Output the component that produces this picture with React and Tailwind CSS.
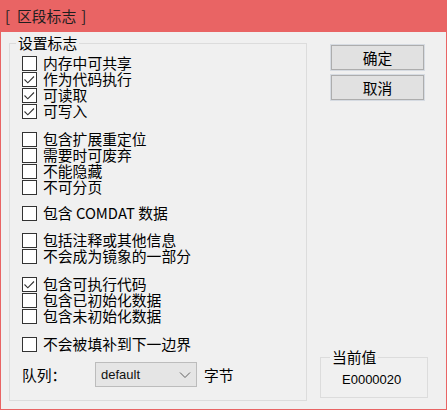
import React from "react";

const CJK = { fontFamily: '"Noto Sans CJK SC", "Noto Sans", sans-serif' };
const LAT = { fontFamily: '"Liberation Sans", Arial, sans-serif' };

function Box({ checked }) {
  return (
    <span className="w-[15px] h-[15px] border border-[#333333] bg-white flex items-center justify-center shrink-0">
      {checked && (
        <svg width="13" height="13" viewBox="0 0 13 13">
          <path d="M1.5 6.5 L4.8 9.8 L11 3.5" stroke="#333333" fill="none" strokeWidth="1.1" />
        </svg>
      )}
    </span>
  );
}

function Row({ checked, children }) {
  return (
    <div className="flex items-center h-[16px] gap-[6px]">
      <Box checked={checked} />
      <span className="leading-[16px] whitespace-nowrap">{children}</span>
    </div>
  );
}

function Button({ children }) {
  return (
    <div className="w-[95px] h-[27px] border border-[#d6dbe2] p-0">
      <div className="w-full h-full border border-[#adadad] bg-[#e1e1e1] flex items-center justify-center leading-[16px]">
        {children}
      </div>
    </div>
  );
}

export default function App() {
  return (
    <div
      className="w-[447px] h-[410px] bg-[#e96464] flex flex-col text-[14.8px] text-[#000000]"
      style={CJK}
    >
      <div className="h-[32px] shrink-0 flex items-center pl-[5px] text-[#1e1e1e] leading-[16px]">
        <span>[</span>
        <span className="ml-[7px]">区段标志</span>
        <span className="ml-[5px]">]</span>
      </div>
      <div className="flex-1 mx-[1px] mb-[1px] bg-[#f0f0f0] flex pl-[8px]">
        <fieldset className="mt-[3px] w-[298px] h-[366px] border border-[#dcdcdc] pl-[12px] pt-[4px] shrink-0">
          <legend className="-ml-[6px] px-[2px] leading-[16px]">设置标志</legend>
          <div className="flex flex-col">
            <Row>内存中可共享</Row>
            <Row checked>作为代码执行</Row>
            <Row checked>可读取</Row>
            <Row checked>可写入</Row>
          </div>
          <div className="flex flex-col mt-[12px]">
            <Row>包含扩展重定位</Row>
            <Row>需要时可废弃</Row>
            <Row>不能隐藏</Row>
            <Row>不可分页</Row>
          </div>
          <div className="flex flex-col mt-[10px]">
            <Row>包含 COMDAT 数据</Row>
          </div>
          <div className="flex flex-col mt-[11px]">
            <Row>包括注释或其他信息</Row>
            <Row>不会成为镜象的一部分</Row>
          </div>
          <div className="flex flex-col mt-[12px]">
            <Row checked>包含可执行代码</Row>
            <Row>包含已初始化数据</Row>
            <Row>包含未初始化数据</Row>
          </div>
          <div className="flex flex-col mt-[12px]">
            <Row>不会被填补到下一边界</Row>
          </div>
          <div className="flex items-center mt-[10px] h-[25px]">
            <span className="w-[73px] leading-[16px]">队列：</span>
            <div className="w-[102px] h-[25px] border border-[#bcbcbc] bg-[#e5e5e5] flex items-center justify-between pl-[5px] pr-[5px]">
              <span className="text-[13px] leading-[16px] text-[#111]" style={LAT}>default</span>
              <svg width="12" height="8" viewBox="0 0 12 8">
                <path d="M1 1.5 L6 6.5 L11 1.5" stroke="#606060" fill="none" strokeWidth="1" />
              </svg>
            </div>
            <span className="ml-[7px] leading-[16px]">字节</span>
          </div>
        </fieldset>
        <div className="ml-[13px] flex flex-col w-[108px]">
          <div className="ml-[10px] mt-[12px] flex flex-col gap-[3px]">
            <Button>确定</Button>
            <Button>取消</Button>
          </div>
          <fieldset className="mt-auto mb-[11px] w-[108px] h-[49px] border border-[#dcdcdc] pl-0 pt-[7px]">
            <legend className="ml-[9px] px-[2px] leading-[16px]">当前值</legend>
            <div className="pl-[21px] text-[13px] leading-[16px]" style={LAT}>E0000020</div>
          </fieldset>
        </div>
      </div>
    </div>
  );
}
